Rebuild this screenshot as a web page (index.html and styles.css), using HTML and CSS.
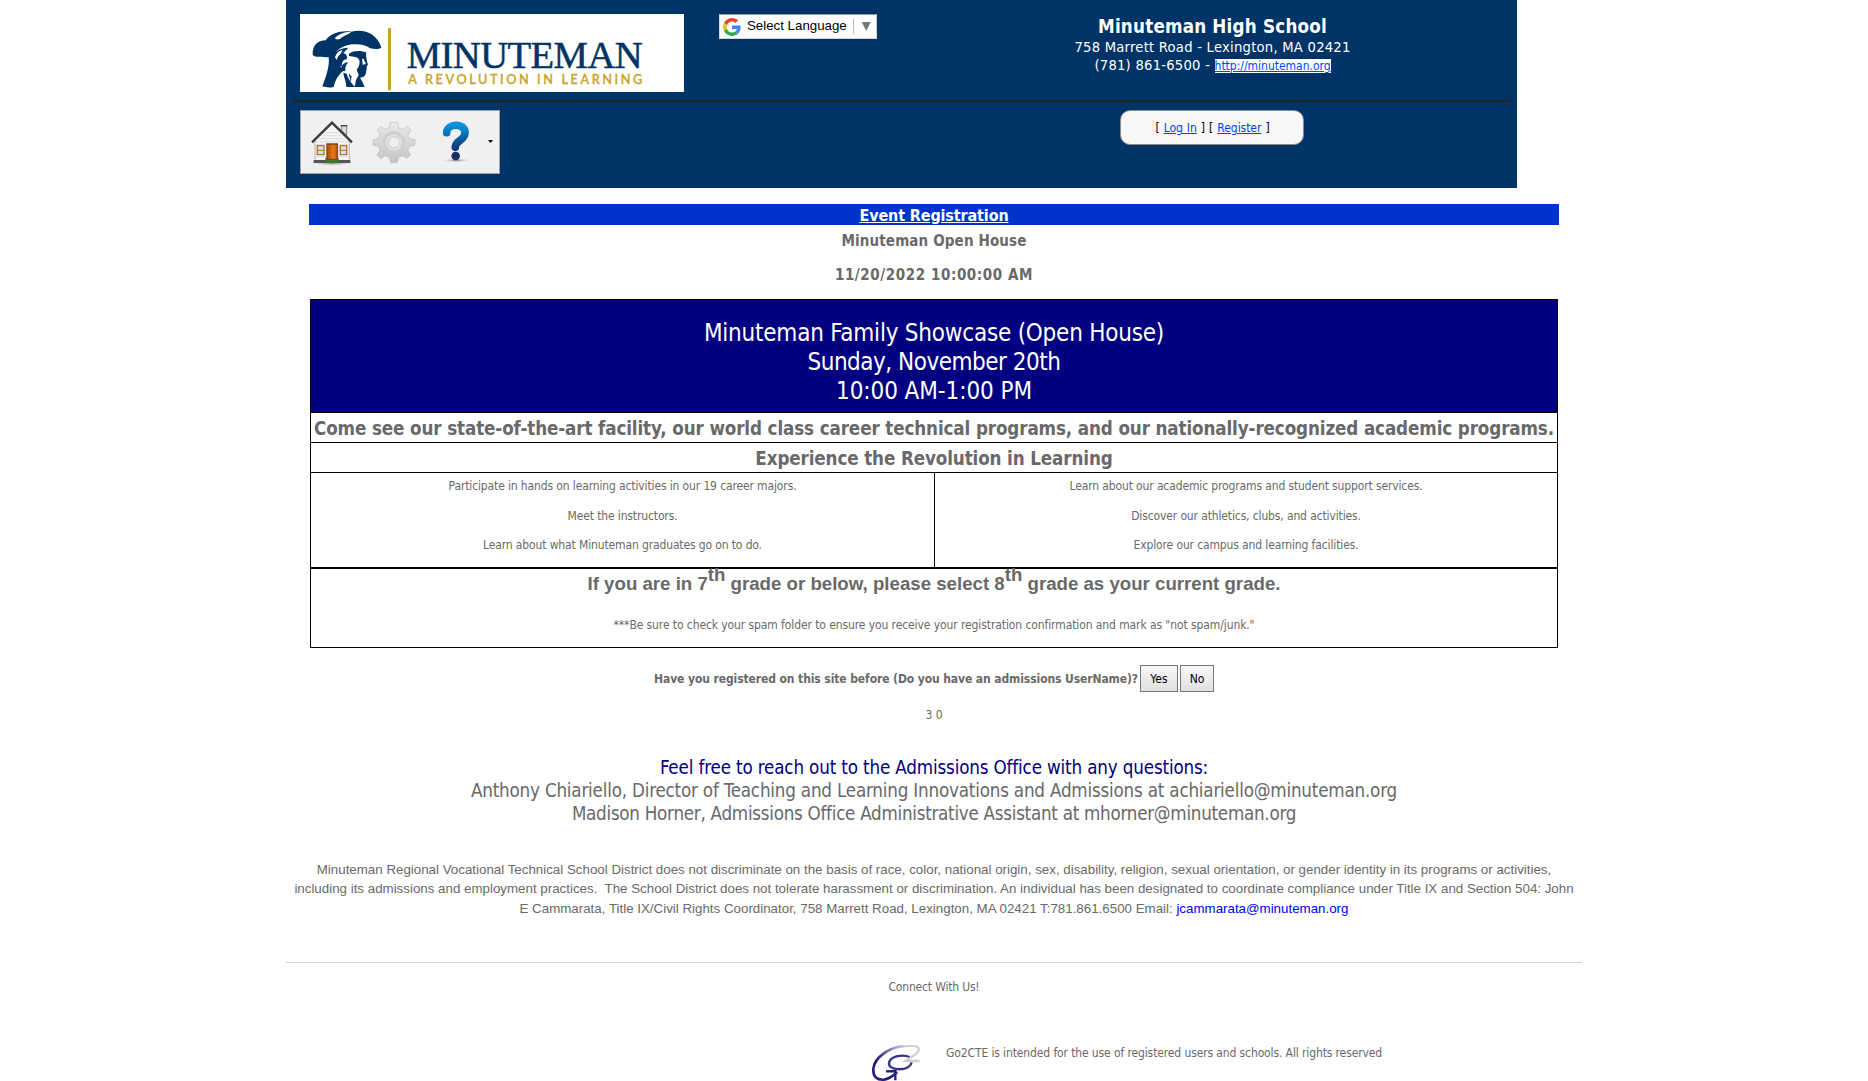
FILE: index.html
```html
<!DOCTYPE html>
<html lang="en">
<head>
<meta charset="utf-8">
<title>Event Registration - Minuteman High School</title>
<link rel="stylesheet" href="styles.css">
</head>
<body>
<div class="page">
  <header class="header">
    <div class="header-top">
      <svg class="logo" viewBox="60 42 1152 234" role="img" aria-label="Minuteman">
        <rect x="60" y="42" width="1152" height="234" fill="#fff"/>
        <g fill="#003366">
          <path d="M98 165C97 136 112 122 137 121C152 98 185 91 214 95C252 86 291 100 304 143C296 148 284 147 270 145C258 134 240 131 215 133C196 136 184 142 174 150C166 158 163 168 163 178C163 190 184 198 192 210C176 224 166 238 161 261C150 264 136 262 127 259C135 238 150 200 146 172C125 170 105 173 98 165Z"/>
          <path d="M158 176C162 154 182 143 205 143L190 159C200 162 203 170 200 178C190 178 184 188 186 198C172 198 158 190 158 176Z"/>
          <path d="M184 212C182 196 190 189 204 187C197 196 195 204 196 214Z"/>
          <path d="M207 161C222 150 243 152 258 157C258 172 260 182 264 194C258 198 262 206 258 216C257 228 250 233 240 233L247 245L254 261L224 261L228 240L236 225L230 209C238 200 240 190 238 180C234 170 221 170 207 168Z"/>
          <path d="M190 218L200 221C206 240 215 251 226 261L199 261C199 245 192 235 190 218Z"/>
        </g>
        <path d="M165 114C178 100 198 95 213 96C206 104 190 107 180 117C172 119 166 119 165 114Z" fill="#fff"/>
        <path d="M165 172C168 160 176 153 188 149L182 161C176 166 172 172 170 180Z" fill="#fff"/>
        <path d="M246 176L251 177L258 192L248 194Z" fill="#fff"/>
        <path d="M206 220L214 229L213 248Z" fill="#003366"/>
        <rect x="324" y="84" width="9" height="187" fill="#c9a227"/>
        <text class="logo-name" x="380" y="203" textLength="708">MINUTEMAN</text>
        <text class="logo-tag" x="385" y="253" textLength="702">A REVOLUTION IN LEARNING</text>
      </svg>
      <div class="translate">
        <svg width="18" height="18" viewBox="0 0 48 48"><path fill="#ea4335" d="M24 9.500c3.540 0 6.710 1.220 9.210 3.600l6.850-6.850C35.900 2.380 30.470 0 24 0 14.620 0 6.510 5.380 2.560 13.220l7.980 6.190C12.430 13.720 17.740 9.500 24 9.500z"/><path fill="#4285f4" d="M46.980 24.550c0-1.570-.15-3.090-.38-4.550H24v9.020h12.940c-.58 2.960-2.260 5.480-4.780 7.180l7.730 6c4.510-4.180 7.090-10.360 7.090-17.650z"/><path fill="#fbbc05" d="M10.530 28.590c-.48-1.450-.76-2.990-.76-4.590s.27-3.140.76-4.590l-7.980-6.190C.92 16.460 0 20.120 0 24c0 3.880.92 7.540 2.560 10.780l7.970-6.190z"/><path fill="#34a853" d="M24 48c6.480 0 11.930-2.130 15.890-5.810l-7.730-6c-2.150 1.450-4.920 2.300-8.160 2.300-6.260 0-11.570-4.220-13.470-9.910l-7.980 6.190C6.510 42.620 14.620 48 24 48z"/></svg>
        <span class="translate-label">Select Language</span>
        <span class="translate-arrow"></span>
      </div>
      <div class="school">
        <div class="school-name">Minuteman High School</div>
        <div class="school-line">758 Marrett Road - Lexington, MA 02421</div>
        <div class="school-line">(781) 861-6500 - <a class="school-link" href="#">http://minuteman.org</a></div>
      </div>
    </div>
    <div class="header-bottom">
      <nav class="toolbar">
        <svg class="tool-icons" width="198" height="62" viewBox="63 333 594 186">
          <defs>
            <linearGradient id="q" x1="0" y1="0" x2="0" y2="1"><stop offset="0" stop-color="#0a93d8"/><stop offset="1" stop-color="#123a80"/></linearGradient>
            <linearGradient id="g" x1="0" y1="0" x2="0" y2="1"><stop offset="0" stop-color="#e9e9e9"/><stop offset="1" stop-color="#c4c4c4"/></linearGradient>
            <linearGradient id="d" x1="0" y1="0" x2="1" y2="0"><stop offset="0" stop-color="#a84a08"/><stop offset=".6" stop-color="#e87a18"/><stop offset="1" stop-color="#b85a10"/></linearGradient>
            <radialGradient id="s"><stop offset="0" stop-color="#888"/><stop offset="1" stop-color="#f0f0f0" stop-opacity="0"/></radialGradient>
          </defs>
          <ellipse cx="156" cy="490" rx="66" ry="9" fill="url(#s)"/>
          <path d="M184 377H200V406L184 390Z" fill="#ddd" stroke="#555" stroke-width="2"/>
          <path d="M182 377H202" stroke="#444" stroke-width="4"/>
          <path d="M105 482V418L156 371L208 418V482Z" fill="#f4f4f4" stroke="#999" stroke-width="2"/>
          <path d="M137 398H175M127 407H185M117 416H195M107 425H206M107 434H206M107 443H206M107 452H206M107 461H206M107 470H206" stroke="#d2d2d2" stroke-width="2"/>
          <path d="M96 427L156 368L216 427" fill="none" stroke="#3c3c3c" stroke-width="7"/>
          <path d="M101 480H211V489H101Z" fill="#555"/>
          <path d="M136 474H176V489H136Z" fill="#3c7a2c"/>
          <path d="M141 432H172V478H141Z" fill="url(#d)" stroke="#8a4408" stroke-width="4"/>
          <path d="M112 437H132V464H112ZM181 437H200V464H181Z" fill="#d4e0ee" stroke="#b87420" stroke-width="4"/>
          <path d="M112 451H132M181 451H200" stroke="#b87420" stroke-width="3"/>
          <path d="M331 367H353L356 384L368 389L383 379L393 391L384 405L389 416L405 419V435L389 439L384 451L392 465L381 475L367 467L356 472L352 488H332L328 472L316 467L302 476L291 465L300 451L295 439L279 435V419L295 416L300 404L291 390L302 379L316 388L328 383Z" fill="url(#g)" stroke="#bdbdbd" stroke-width="2"/>
          <circle cx="342" cy="427" r="33" fill="#cfcfcf"/>
          <circle cx="342" cy="427" r="25" fill="#dfdfdf"/>
          <circle cx="342" cy="427" r="16" fill="#f0f0f0" stroke="#c4c4c4" stroke-width="2"/>
          <ellipse cx="529" cy="481" rx="49" ry="7" fill="url(#s)"/>
          <path d="M500 398C500 370 555 367 555 398C555 422 526 420 526 442" fill="none" stroke="url(#q)" stroke-width="23" stroke-linecap="round"/>
          <circle cx="527" cy="468" r="13" fill="#182c66"/>
          <path d="M624 420H639L631.500 429Z" fill="#000"/>
        </svg>
      </nav>
      <div class="login">[ <a href="#">Log In</a> ] [ <a href="#">Register</a> ]</div>
    </div>
  </header>

  <main>
    <h1 class="banner">Event Registration</h1>
    <div class="event-name">Minuteman Open House</div>
    <div class="event-date">11/20/2022 10:00:00 AM</div>

    <section class="details">
      <div class="showcase">
        <div>Minuteman Family Showcase (Open House)</div>
        <div class="showcase-day">Sunday, November 20th</div>
        <div class="showcase-time">10:00 AM-1:00 PM</div>
      </div>
      <div class="headline">Come see our state-of-the-art facility, our world class career technical programs, and our nationally-recognized academic programs.</div>
      <div class="headline">Experience the Revolution in Learning</div>
      <div class="columns">
        <div class="column">
          <p>Participate in hands on learning activities in our 19 career majors.</p>
          <p>Meet the instructors.</p>
          <p>Learn about what Minuteman graduates go on to do.</p>
        </div>
        <div class="column">
          <p>Learn about our academic programs and student support services.</p>
          <p>Discover our athletics, clubs, and activities.</p>
          <p>Explore our campus and learning facilities.</p>
        </div>
      </div>
      <div class="notice">
        <div class="grade">If you are in 7<sup>th</sup> grade or below, please select 8<sup>th</sup> grade as your current grade.</div>
        <div class="spam">***Be sure to check your spam folder to ensure you receive your registration confirmation and mark as "not spam/junk."</div>
      </div>
    </section>

    <div class="question">
      <span class="question-text">Have you registered on this site before (Do you have an admissions UserName)?</span>
      <button class="btn btn-yes">Yes</button>
      <button class="btn btn-no">No</button>
    </div>
    <div class="counts">3 0</div>

    <div class="contact">
      <div class="contact-lead">Feel free to reach out to the Admissions Office with any questions:</div>
      <div class="contact-director">Anthony Chiariello, Director of Teaching and Learning Innovations and Admissions at achiariello@minuteman.org</div>
      <div class="contact-assistant">Madison Horner, Admissions Office Administrative Assistant at mhorner@minuteman.org</div>
    </div>

    <div class="policy">Minuteman Regional Vocational Technical School District does not discriminate on the basis of race, color, national origin, sex, disability, religion, sexual orientation, or gender identity in its programs or activities,<br>including its admissions and employment practices.&nbsp; The School District does not tolerate harassment or discrimination. An individual has been designated to coordinate compliance under Title IX and Section 504: John<br>E Cammarata, Title IX/Civil Rights Coordinator, 758 Marrett Road, Lexington, MA 02421 T:781.861.6500 Email: <a href="#">jcammarata@minuteman.org</a></div>
  </main>

  <footer class="footer">
    <div class="connect">Connect With Us!</div>
    <div class="legal">
      <svg class="go-logo" width="54" height="38" viewBox="-3 0 162 114" fill="none">
        <defs><linearGradient id="b" x1="1" y1="0" x2="0.300" y2="0.600"><stop offset="0" stop-color="#d8d8ec"/><stop offset="1" stop-color="#23207a"/></linearGradient></defs>
        <path d="M104 3C55 2 6 38 4 72C3 96 15 106 36 104C51 102 64 92 76 81" stroke="url(#b)" stroke-width="8"/>
        <path d="M42 79L70 78L70 106" stroke="#23207a" stroke-width="7"/>
        <path d="M113 36C89 26 52 35 51 56C51 77 112 81 119 52" stroke="#35328a" stroke-width="7"/>
        <path d="M104 3C128 -1 146 6 139 18C132 31 115 38 100 48H143" stroke="#cfcfcf" stroke-width="7"/>
      </svg>
      <div class="legal-text">Go2CTE is intended for the use of registered users and schools. All rights reserved</div>
    </div>
  </footer>
</div>
</body>
</html>
```
FILE: styles.css
```css
* { box-sizing: border-box; }
html { overflow: hidden; }
body {
  margin: 0;
  background: #fff;
  color: #696969;
  font: 12px/15px "DejaVu Sans Condensed", "DejaVu Sans", sans-serif;
  letter-spacing: -0.13px;
}
.page { width: 1296px; margin: 0 auto; }

.header {
  width: 1231px;
  height: 188px;
  padding: 0 6px;
  background: #003366;
}
.header-top {
  display: flex;
  align-items: flex-start;
  height: 102px;
  padding-left: 8px;
  border-bottom: 2px solid #242424;
}
.logo { width: 384px; height: 78px; margin-top: 14px; flex: none; }
.logo-name { font: 116px "Liberation Serif", serif; fill: #003366; stroke: #003366; stroke-width: 1.5px; letter-spacing: 0; }
.logo-tag { font: 500 38px Lato, sans-serif; fill: #c9a227; stroke: #c9a227; stroke-width: 1px; letter-spacing: 0; }

.translate {
  display: flex;
  align-items: center;
  width: 158px;
  height: 25px;
  margin: 14px 0 0 35px;
  padding-left: 3px;
  background: #fff;
  border: 1px solid #d5d5d5;
  border-top-color: #9b9b9b;
}
.translate-label {
  margin-left: 6px;
  padding-bottom: 1px;
  color: #000;
  font: 13.33px/16px "Liberation Sans", sans-serif;
  letter-spacing: -0.02px;
  white-space: nowrap;
}
.translate-arrow {
  display: flex;
  height: 15px;
  margin-left: 6px;
  padding: 3px 0 0 8px;
  border-left: 1px solid #bbb;
}
.translate-arrow::after {
  content: "";
  width: 9px;
  height: 9px;
  background: #767676;
  clip-path: polygon(0 0, 100% 0, 50% 100%);
}

.school {
  width: 300px;
  margin-left: 185.5px;
  padding-top: 16px;
  color: #fff;
  text-align: center;
}
.school-name { font-size: 18.67px; font-weight: 700; line-height: 22px; letter-spacing: 0.2px; }
.school-line { font-size: 14.67px; line-height: 18px; letter-spacing: 0.23px; white-space: nowrap; }
.school-link {
  background: #fff;
  color: #0044ff;
  font-size: 12px;
  letter-spacing: -0.01px;
}

.header-bottom { display: flex; align-items: flex-start; padding: 8px 0 0 8px; }
.toolbar { width: 200px; height: 64px; background: #f0f0f0; border: 1px solid #a0a0a0; }
.tool-icons { display: block; }
.login {
  width: 184px;
  height: 35px;
  margin-left: 620px;
  padding-left: 1px;
  border: 1px solid #8c8c8c;
  border-radius: 10px;
  background: #f7f7f7;
  color: #000;
  line-height: 34px;
  letter-spacing: -0.05px;
  word-spacing: 0.7px;
  text-align: center;
}
.login a { color: #0044ff; }

.banner {
  height: 21px;
  margin: 16px 23px 0;
  padding-top: 1px;
  background: #0033cc;
  color: #fff;
  font-size: 16px;
  line-height: 21px;
  letter-spacing: -0.13px;
  text-align: center;
  text-decoration: underline;
}
.event-name, .event-date { font-size: 15px; font-weight: 700; text-align: center; }
.event-name { padding-top: 1px; line-height: 31px; letter-spacing: 0.14px; }
.event-date { padding-top: 1px; line-height: 35px; margin-bottom: 6px; letter-spacing: 0.58px; }

.details {
  width: 1248px;
  margin: 0 auto;
  border: 1px solid #000;
  text-align: center;
}
.showcase {
  height: 113px;
  padding-top: 19px;
  border-bottom: 1px solid #000;
  background: #000080;
  color: #fff;
  font-size: 24px;
  line-height: 29px;
  letter-spacing: -0.22px;
}
.showcase-day { letter-spacing: -0.49px; }
.showcase-time { letter-spacing: -0.08px; }
.headline {
  height: 30px;
  padding-top: 2px;
  border-bottom: 1px solid #000;
  font-size: 18.67px;
  font-weight: 700;
  line-height: 28px;
  letter-spacing: -0.125px;
  white-space: nowrap;
}
.columns { display: grid; grid-template-columns: 624px 1fr; height: 96px; border-bottom: 2px solid #000; }
.column { padding-top: 6px; }
.column:first-child { border-right: 1px solid #000; }
.column p { margin: 0 0 14.6px; }
.notice { height: 78px; }
.grade { font: 700 18.67px/29px "Liberation Sans", sans-serif; letter-spacing: 0; }
.grade sup { font-size: 18.67px; line-height: 0; vertical-align: 9px; }
.spam { margin-top: 20px; letter-spacing: -0.094px; }

.question {
  display: flex;
  justify-content: center;
  align-items: center;
  gap: 2px;
  margin-top: 17px;
  font-weight: 700;
  letter-spacing: -0.098px;
}
.question-text { padding-top: 2px; }
.btn {
  height: 27px;
  padding: 1px 0 0;
  border: 1px solid #777;
  background: linear-gradient(#f8f8f8, #e0e0e0);
  color: #000;
  font: 12px/15px "DejaVu Sans Condensed", "DejaVu Sans", sans-serif;
}
.btn-yes { width: 38px; }
.btn-no { width: 34px; }
.counts { margin-top: 16px; text-align: center; }

.contact { margin-top: 33px; font-size: 18.67px; line-height: 23px; text-align: center; }
.contact-lead { color: #000080; letter-spacing: -0.154px; }
.contact-director { letter-spacing: -0.199px; }
.contact-assistant { letter-spacing: -0.272px; }

.policy {
  height: 59px;
  margin-top: 34.6px;
  font: 13.33px/19.5px "Liberation Sans", sans-serif;
  letter-spacing: 0;
  text-align: center;
  white-space: nowrap;
}
.policy a { color: #0000ff; text-decoration: none; }

.footer { margin-top: 43px; border-top: 1px solid #d3d3d3; }
.connect { margin-top: 17px; text-align: center; letter-spacing: -0.178px; }
.legal { display: flex; gap: 21px; margin: 51px 0 0 585px; }
.go-logo { flex: none; margin-top: -1px; }
.legal-text { letter-spacing: -0.117px; white-space: nowrap; }
```
